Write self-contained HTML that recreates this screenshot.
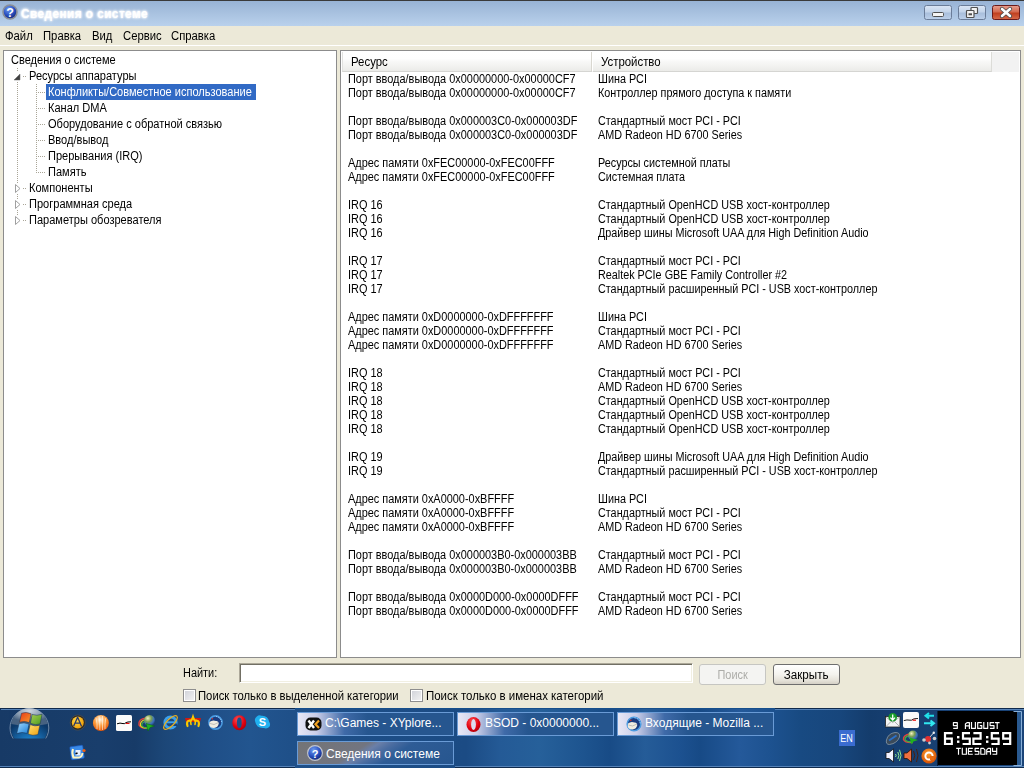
<!DOCTYPE html>
<html><head><meta charset="utf-8">
<style>
*{margin:0;padding:0;box-sizing:border-box}
html,body{width:1024px;height:768px;overflow:hidden;background:#ece9d8;font-family:"Liberation Sans",sans-serif;font-size:11px;color:#000;position:relative}
.abs{position:absolute}
#topline{left:0;top:0;width:1024px;height:1px;background:#3a3a3a}
#title{left:0;top:1px;width:1024px;height:25px;background:linear-gradient(#98b3d5,#a9c2e0 50%,#b9d1ec)}
#ttext{left:21px;top:6px;font-weight:bold;font-size:13px;letter-spacing:0.6px;color:#fff;text-shadow:0 0 2px #fff,0 0 3px #fff,0 0 4px #e8f0ff;white-space:nowrap;transform-origin:0 0;transform:scaleX(0.895)}
#menu span{position:absolute;top:30px;white-space:nowrap;line-height:13px;font-size:12px;transform:scaleX(.94) translateZ(0);transform-origin:0 0}
#wline{left:0;top:45px;width:1024px;height:1px;background:#fff}
.panel{background:#fff;border:1px solid #8c8c8c}
#lp{left:3px;top:50px;width:334px;height:608px}
#rp{left:340px;top:50px;width:681px;height:608px}
.t{position:absolute;white-space:nowrap;line-height:14px;font-size:12px;transform:scaleX(.9) translateZ(0);transform-origin:0 0}
.t1{transform:scaleX(.91) translateZ(0)}
.s{font-size:12px;transform:scaleX(.91) translateZ(0);transform-origin:0 0;white-space:nowrap}
.tt{position:absolute;white-space:nowrap;line-height:16px;font-size:12px;transform:scaleX(.92) translateZ(0);transform-origin:0 0}
.sel{color:#fff}
#selbg{left:46px;top:84px;width:210px;height:16px;background:#316ac5}
#hdr{left:342px;top:52px;width:677px;height:20px;background:#f2f2f2}
.hc{position:absolute;top:0;height:20px;background:linear-gradient(#fff 0,#fefefe 35%,#f8f8f7 50%,#f2f2f0 75%,#ebebe8 100%);border-bottom:1px solid #d5d5d2}
.hc span{position:absolute;top:3px;line-height:14px;font-size:12px;transform:scaleX(.95) translateZ(0);transform-origin:0 0}
.sep{position:absolute;top:0;width:2px;height:19px;border-left:1px solid #d9d7d0;border-right:1px solid #fff}
.btn{position:absolute;border:1px solid #003c74;border-radius:3px;background:linear-gradient(#fff,#f4f3ee 50%,#e6e3da 80%,#d4d0c6);text-align:center;line-height:21px}
.chk{position:absolute;width:13px;height:13px;border:1px solid #8e8e8e;box-shadow:inset 0 0 0 1px #fff;background:linear-gradient(135deg,#cfd1d8,#f4f4f4)}
#tb{left:0;top:708px;width:1024px;height:60px;background:linear-gradient(90deg,#1a3e6b 0,#1f4a7d 20%,#245791 45%,#1f4c82 70%,#1a4175 100%);border-top:1px solid #5a83b8}
.tbtn{position:absolute;overflow:visible;height:24px;width:157px;border:1px solid #6a9bd6;color:#fff;font-size:12px;line-height:20px;padding-left:27px;white-space:nowrap;overflow:hidden;background:linear-gradient(90deg,#e8e8f6 0,#c9cde8 12%,#3f6aa8 30%,#26568f 45%,#26568f 100%)}
.tbtn.act{padding-top:2px;padding-left:28px;background:linear-gradient(147deg,#747476 0,#727580 38%,#6a7fa8 44%,#4a6ca0 52%,#2e5c96 62%,#27568f 100%)}
.t,.tt,.s,#menu span,.hc span{padding-bottom:4px}
</style></head><body>
<div class="abs" id="topline"></div>
<div class="abs" id="title"></div>
<svg class="abs" style="left:2px;top:4px" width="17" height="17" viewBox="0 0 17 17">
 <defs><radialGradient id="hg" cx="0.4" cy="0.3" r="0.7"><stop offset="0" stop-color="#6f9cf0"/><stop offset="0.6" stop-color="#2a50c0"/><stop offset="1" stop-color="#14287a"/></radialGradient></defs>
 <circle cx="8" cy="8" r="7" fill="url(#hg)" stroke="#8a8f98" stroke-width="1.6"/>
 <text x="8" y="12.6" font-family="Liberation Sans" font-weight="bold" font-size="12.5" fill="#fff" text-anchor="middle">?</text>
</svg>
<div class="abs" id="ttext">Сведения о системе</div>
<div id="menu">
<span style="left:5px">Файл</span><span style="left:43px">Правка</span><span style="left:92px">Вид</span><span style="left:123px">Сервис</span><span style="left:171px">Справка</span>
</div>
<!-- window buttons -->
<svg class="abs" style="left:923px;top:4px" width="100" height="18" viewBox="0 0 100 18">
 <defs>
  <linearGradient id="wb" x1="0" y1="0" x2="0" y2="1"><stop offset="0" stop-color="#dbe6f4"/><stop offset="0.45" stop-color="#c3d4ea"/><stop offset="0.55" stop-color="#a9bfdc"/><stop offset="1" stop-color="#bcd0ea"/></linearGradient>
  <linearGradient id="cb" x1="0" y1="0" x2="0" y2="1"><stop offset="0" stop-color="#e8a090"/><stop offset="0.45" stop-color="#d46a50"/><stop offset="0.55" stop-color="#c04020"/><stop offset="1" stop-color="#d86a4a"/></linearGradient>
 </defs>
 <rect x="1.5" y="1.5" width="27" height="14" rx="2" fill="url(#wb)" stroke="#6a7c98"/>
  <rect x="9.5" y="8.5" width="11" height="4" rx="1" fill="#f4f4f4" stroke="#505050"/>
 <rect x="35.5" y="1.5" width="27" height="14" rx="2" fill="url(#wb)" stroke="#6a7c98"/>
 <rect x="48" y="3.5" width="6.5" height="6" rx="0.8" fill="#f4f4f4" stroke="#505050" stroke-width="1.2"/>
 <rect x="43.5" y="6.5" width="7.5" height="7" rx="0.8" fill="#f4f4f4" stroke="#505050" stroke-width="1.2"/>
 <rect x="45.5" y="9.3" width="3.5" height="2" fill="#505050"/>
 <rect x="69.5" y="1.5" width="27" height="14" rx="2" fill="url(#cb)" stroke="#6a1a1a"/>
 <path d="M79 5 L87 12 M87 5 L79 12" stroke="#4a4a4a" stroke-width="4.2" stroke-linecap="round"/>
 <path d="M79 5 L87 12 M87 5 L79 12" stroke="#fff" stroke-width="2.6" stroke-linecap="round"/>
</svg>
<div class="abs" id="wline"></div>
<div class="abs panel" id="lp"></div>
<div class="abs panel" id="rp"></div>

<!-- tree lines -->
<svg class="abs" style="left:0;top:0" width="60" height="240">
 <g fill="#aca899">
  <rect x="17" y="68" width="1" height="1"/><rect x="17" y="70" width="1" height="1"/>
 </g>
 <path id="l1" d="" />
</svg>
<div class="abs" id="selbg"></div>
<svg class="abs" style="left:0;top:0" width="60" height="240"><g fill="#a9a597"><rect x="17" y="68" width="1" height="1"/><rect x="17" y="70" width="1" height="1"/><rect x="17" y="82" width="1" height="1"/><rect x="17" y="84" width="1" height="1"/><rect x="17" y="86" width="1" height="1"/><rect x="17" y="88" width="1" height="1"/><rect x="17" y="90" width="1" height="1"/><rect x="17" y="92" width="1" height="1"/><rect x="17" y="94" width="1" height="1"/><rect x="17" y="96" width="1" height="1"/><rect x="17" y="98" width="1" height="1"/><rect x="17" y="100" width="1" height="1"/><rect x="17" y="102" width="1" height="1"/><rect x="17" y="104" width="1" height="1"/><rect x="17" y="106" width="1" height="1"/><rect x="17" y="108" width="1" height="1"/><rect x="17" y="110" width="1" height="1"/><rect x="17" y="112" width="1" height="1"/><rect x="17" y="114" width="1" height="1"/><rect x="17" y="116" width="1" height="1"/><rect x="17" y="118" width="1" height="1"/><rect x="17" y="120" width="1" height="1"/><rect x="17" y="122" width="1" height="1"/><rect x="17" y="124" width="1" height="1"/><rect x="17" y="126" width="1" height="1"/><rect x="17" y="128" width="1" height="1"/><rect x="17" y="130" width="1" height="1"/><rect x="17" y="132" width="1" height="1"/><rect x="17" y="134" width="1" height="1"/><rect x="17" y="136" width="1" height="1"/><rect x="17" y="138" width="1" height="1"/><rect x="17" y="140" width="1" height="1"/><rect x="17" y="142" width="1" height="1"/><rect x="17" y="144" width="1" height="1"/><rect x="17" y="146" width="1" height="1"/><rect x="17" y="148" width="1" height="1"/><rect x="17" y="150" width="1" height="1"/><rect x="17" y="152" width="1" height="1"/><rect x="17" y="154" width="1" height="1"/><rect x="17" y="156" width="1" height="1"/><rect x="17" y="158" width="1" height="1"/><rect x="17" y="160" width="1" height="1"/><rect x="17" y="162" width="1" height="1"/><rect x="17" y="164" width="1" height="1"/><rect x="17" y="166" width="1" height="1"/><rect x="17" y="168" width="1" height="1"/><rect x="17" y="170" width="1" height="1"/><rect x="17" y="172" width="1" height="1"/><rect x="17" y="174" width="1" height="1"/><rect x="17" y="176" width="1" height="1"/><rect x="17" y="178" width="1" height="1"/><rect x="17" y="180" width="1" height="1"/><rect x="17" y="182" width="1" height="1"/><rect x="17" y="194" width="1" height="1"/><rect x="17" y="196" width="1" height="1"/><rect x="17" y="198" width="1" height="1"/><rect x="17" y="210" width="1" height="1"/><rect x="17" y="212" width="1" height="1"/><rect x="17" y="214" width="1" height="1"/><rect x="23" y="76" width="1" height="1"/><rect x="25" y="76" width="1" height="1"/><rect x="23" y="188" width="1" height="1"/><rect x="25" y="188" width="1" height="1"/><rect x="23" y="204" width="1" height="1"/><rect x="25" y="204" width="1" height="1"/><rect x="23" y="220" width="1" height="1"/><rect x="25" y="220" width="1" height="1"/><rect x="36" y="84" width="1" height="1"/><rect x="36" y="86" width="1" height="1"/><rect x="36" y="88" width="1" height="1"/><rect x="36" y="90" width="1" height="1"/><rect x="36" y="92" width="1" height="1"/><rect x="36" y="94" width="1" height="1"/><rect x="36" y="96" width="1" height="1"/><rect x="36" y="98" width="1" height="1"/><rect x="36" y="100" width="1" height="1"/><rect x="36" y="102" width="1" height="1"/><rect x="36" y="104" width="1" height="1"/><rect x="36" y="106" width="1" height="1"/><rect x="36" y="108" width="1" height="1"/><rect x="36" y="110" width="1" height="1"/><rect x="36" y="112" width="1" height="1"/><rect x="36" y="114" width="1" height="1"/><rect x="36" y="116" width="1" height="1"/><rect x="36" y="118" width="1" height="1"/><rect x="36" y="120" width="1" height="1"/><rect x="36" y="122" width="1" height="1"/><rect x="36" y="124" width="1" height="1"/><rect x="36" y="126" width="1" height="1"/><rect x="36" y="128" width="1" height="1"/><rect x="36" y="130" width="1" height="1"/><rect x="36" y="132" width="1" height="1"/><rect x="36" y="134" width="1" height="1"/><rect x="36" y="136" width="1" height="1"/><rect x="36" y="138" width="1" height="1"/><rect x="36" y="140" width="1" height="1"/><rect x="36" y="142" width="1" height="1"/><rect x="36" y="144" width="1" height="1"/><rect x="36" y="146" width="1" height="1"/><rect x="36" y="148" width="1" height="1"/><rect x="36" y="150" width="1" height="1"/><rect x="36" y="152" width="1" height="1"/><rect x="36" y="154" width="1" height="1"/><rect x="36" y="156" width="1" height="1"/><rect x="36" y="158" width="1" height="1"/><rect x="36" y="160" width="1" height="1"/><rect x="36" y="162" width="1" height="1"/><rect x="36" y="164" width="1" height="1"/><rect x="36" y="166" width="1" height="1"/><rect x="36" y="168" width="1" height="1"/><rect x="36" y="170" width="1" height="1"/><rect x="36" y="172" width="1" height="1"/><rect x="38" y="92" width="1" height="1"/><rect x="40" y="92" width="1" height="1"/><rect x="42" y="92" width="1" height="1"/><rect x="44" y="92" width="1" height="1"/><rect x="38" y="108" width="1" height="1"/><rect x="40" y="108" width="1" height="1"/><rect x="42" y="108" width="1" height="1"/><rect x="44" y="108" width="1" height="1"/><rect x="38" y="124" width="1" height="1"/><rect x="40" y="124" width="1" height="1"/><rect x="42" y="124" width="1" height="1"/><rect x="44" y="124" width="1" height="1"/><rect x="38" y="140" width="1" height="1"/><rect x="40" y="140" width="1" height="1"/><rect x="42" y="140" width="1" height="1"/><rect x="44" y="140" width="1" height="1"/><rect x="38" y="156" width="1" height="1"/><rect x="40" y="156" width="1" height="1"/><rect x="42" y="156" width="1" height="1"/><rect x="44" y="156" width="1" height="1"/><rect x="38" y="172" width="1" height="1"/><rect x="40" y="172" width="1" height="1"/><rect x="42" y="172" width="1" height="1"/><rect x="44" y="172" width="1" height="1"/></g><path d="M20 74 L20 80 L14 80 Z" fill="#404040" stroke="#6a6a6a" stroke-width="0.5"/><path d="M15.5 184.5 L20 188.5 L15.5 192.5 Z" fill="#fff" stroke="#a0a0a0" stroke-width="1"/><path d="M15.5 200.5 L20 204.5 L15.5 208.5 Z" fill="#fff" stroke="#a0a0a0" stroke-width="1"/><path d="M15.5 216.5 L20 220.5 L15.5 224.5 Z" fill="#fff" stroke="#a0a0a0" stroke-width="1"/></svg>
<div class="tt" style="left:11px;top:52px">Сведения о системе</div>
<div class="tt" style="left:29px;top:68px">Ресурсы аппаратуры</div>
<div class="tt sel" style="left:48px;top:84px">Конфликты/Совместное использование</div>
<div class="tt" style="left:48px;top:100px">Канал DMA</div>
<div class="tt" style="left:48px;top:116px">Оборудование с обратной связью</div>
<div class="tt" style="left:48px;top:132px">Ввод/вывод</div>
<div class="tt" style="left:48px;top:148px">Прерывания (IRQ)</div>
<div class="tt" style="left:48px;top:164px">Память</div>
<div class="tt" style="left:29px;top:180px">Компоненты</div>
<div class="tt" style="left:29px;top:196px">Программная среда</div>
<div class="tt" style="left:29px;top:212px">Параметры обозревателя</div>

<!-- list header -->
<div class="abs" id="hdr">
 <div class="hc" style="left:0;width:250px;border-left:1px solid #e2e2e0"><span style="left:8px">Ресурс</span></div>
 <div class="sep" style="left:249px"></div>
 <div class="hc" style="left:251px;width:399px;border-right:1px solid #dcdcd8"><span style="left:8px">Устройство</span></div>
</div>
<div class="t t1" style="left:348px;top:72px">Порт ввода/вывода 0x00000000-0x00000CF7</div><div class="t" style="left:598px;top:72px">Шина PCI</div>
<div class="t t1" style="left:348px;top:86px">Порт ввода/вывода 0x00000000-0x00000CF7</div><div class="t" style="left:598px;top:86px">Контроллер прямого доступа к памяти</div>
<div class="t t1" style="left:348px;top:114px">Порт ввода/вывода 0x000003C0-0x000003DF</div><div class="t" style="left:598px;top:114px">Стандартный мост PCI - PCI</div>
<div class="t t1" style="left:348px;top:128px">Порт ввода/вывода 0x000003C0-0x000003DF</div><div class="t" style="left:598px;top:128px">AMD Radeon HD 6700 Series</div>
<div class="t t1" style="left:348px;top:156px">Адрес памяти 0xFEC00000-0xFEC00FFF</div><div class="t" style="left:598px;top:156px">Ресурсы системной платы</div>
<div class="t t1" style="left:348px;top:170px">Адрес памяти 0xFEC00000-0xFEC00FFF</div><div class="t" style="left:598px;top:170px">Системная плата</div>
<div class="t t1" style="left:348px;top:198px">IRQ 16</div><div class="t" style="left:598px;top:198px">Стандартный OpenHCD USB хост-контроллер</div>
<div class="t t1" style="left:348px;top:212px">IRQ 16</div><div class="t" style="left:598px;top:212px">Стандартный OpenHCD USB хост-контроллер</div>
<div class="t t1" style="left:348px;top:226px">IRQ 16</div><div class="t" style="left:598px;top:226px">Драйвер шины Microsoft UAA для High Definition Audio</div>
<div class="t t1" style="left:348px;top:254px">IRQ 17</div><div class="t" style="left:598px;top:254px">Стандартный мост PCI - PCI</div>
<div class="t t1" style="left:348px;top:268px">IRQ 17</div><div class="t" style="left:598px;top:268px">Realtek PCIe GBE Family Controller #2</div>
<div class="t t1" style="left:348px;top:282px">IRQ 17</div><div class="t" style="left:598px;top:282px">Стандартный расширенный PCI - USB хост-контроллер</div>
<div class="t t1" style="left:348px;top:310px">Адрес памяти 0xD0000000-0xDFFFFFFF</div><div class="t" style="left:598px;top:310px">Шина PCI</div>
<div class="t t1" style="left:348px;top:324px">Адрес памяти 0xD0000000-0xDFFFFFFF</div><div class="t" style="left:598px;top:324px">Стандартный мост PCI - PCI</div>
<div class="t t1" style="left:348px;top:338px">Адрес памяти 0xD0000000-0xDFFFFFFF</div><div class="t" style="left:598px;top:338px">AMD Radeon HD 6700 Series</div>
<div class="t t1" style="left:348px;top:366px">IRQ 18</div><div class="t" style="left:598px;top:366px">Стандартный мост PCI - PCI</div>
<div class="t t1" style="left:348px;top:380px">IRQ 18</div><div class="t" style="left:598px;top:380px">AMD Radeon HD 6700 Series</div>
<div class="t t1" style="left:348px;top:394px">IRQ 18</div><div class="t" style="left:598px;top:394px">Стандартный OpenHCD USB хост-контроллер</div>
<div class="t t1" style="left:348px;top:408px">IRQ 18</div><div class="t" style="left:598px;top:408px">Стандартный OpenHCD USB хост-контроллер</div>
<div class="t t1" style="left:348px;top:422px">IRQ 18</div><div class="t" style="left:598px;top:422px">Стандартный OpenHCD USB хост-контроллер</div>
<div class="t t1" style="left:348px;top:450px">IRQ 19</div><div class="t" style="left:598px;top:450px">Драйвер шины Microsoft UAA для High Definition Audio</div>
<div class="t t1" style="left:348px;top:464px">IRQ 19</div><div class="t" style="left:598px;top:464px">Стандартный расширенный PCI - USB хост-контроллер</div>
<div class="t t1" style="left:348px;top:492px">Адрес памяти 0xA0000-0xBFFFF</div><div class="t" style="left:598px;top:492px">Шина PCI</div>
<div class="t t1" style="left:348px;top:506px">Адрес памяти 0xA0000-0xBFFFF</div><div class="t" style="left:598px;top:506px">Стандартный мост PCI - PCI</div>
<div class="t t1" style="left:348px;top:520px">Адрес памяти 0xA0000-0xBFFFF</div><div class="t" style="left:598px;top:520px">AMD Radeon HD 6700 Series</div>
<div class="t t1" style="left:348px;top:548px">Порт ввода/вывода 0x000003B0-0x000003BB</div><div class="t" style="left:598px;top:548px">Стандартный мост PCI - PCI</div>
<div class="t t1" style="left:348px;top:562px">Порт ввода/вывода 0x000003B0-0x000003BB</div><div class="t" style="left:598px;top:562px">AMD Radeon HD 6700 Series</div>
<div class="t t1" style="left:348px;top:590px">Порт ввода/вывода 0x0000D000-0x0000DFFF</div><div class="t" style="left:598px;top:590px">Стандартный мост PCI - PCI</div>
<div class="t t1" style="left:348px;top:604px">Порт ввода/вывода 0x0000D000-0x0000DFFF</div><div class="t" style="left:598px;top:604px">AMD Radeon HD 6700 Series</div>

<!-- find bar -->
<div class="abs s" style="left:183px;top:666px;line-height:14px">Найти:</div>
<div class="abs" style="left:239px;top:663px;width:454px;height:20px;background:#fff;border-top:1px solid #aca899;border-left:1px solid #aca899;border-bottom:1px solid #fff;border-right:1px solid #fff;box-shadow:inset 1px 1px 0 #716f64,inset -1px -1px 0 #f1efe2"></div>
<div class="btn" style="left:699px;top:664px;width:67px;height:21px;border-color:#c6c6c2;color:#acaca8;background:#f4f4f2"><span class="s" style="display:inline-block;transform-origin:50% 0">Поиск</span></div>
<div class="btn" style="left:773px;top:664px;width:67px;height:21px;border-color:#6e6e6e"><span class="s" style="display:inline-block;transform-origin:50% 0;transform:scaleX(.97) translateZ(0)">Закрыть</span></div>
<div class="chk" style="left:183px;top:689px"></div>
<div class="abs s" style="left:198px;top:689px;line-height:14px;transform:scaleX(.94) translateZ(0)">Поиск только в выделенной категории</div>
<div class="chk" style="left:410px;top:689px"></div>
<div class="abs s" style="left:426px;top:689px;line-height:14px;transform:scaleX(.955) translateZ(0)">Поиск только в именах категорий</div>

<!-- taskbar -->
<div class="abs" id="tb"></div>
<svg class="abs" style="left:0;top:708px" width="1024" height="60" viewBox="0 708 1024 60">
 <defs>
  <linearGradient id="tbg" gradientUnits="userSpaceOnUse" x1="0" y1="0" x2="1024" y2="0"><stop offset="0.0000" stop-color="#173a66"/><stop offset="0.0977" stop-color="#193e6c"/><stop offset="0.1318" stop-color="#173b68"/><stop offset="0.1611" stop-color="#1c4778"/><stop offset="0.2002" stop-color="#1f4e86"/><stop offset="0.2441" stop-color="#22558f"/><stop offset="0.2832" stop-color="#1f5089"/><stop offset="0.4551" stop-color="#1b4b84"/><stop offset="0.4883" stop-color="#245a96"/><stop offset="0.5273" stop-color="#26609a"/><stop offset="0.5664" stop-color="#1e5590"/><stop offset="0.5957" stop-color="#184b86"/><stop offset="0.6299" stop-color="#255c98"/><stop offset="0.6641" stop-color="#1c5190"/><stop offset="0.6836" stop-color="#174a86"/><stop offset="0.7227" stop-color="#24599a"/><stop offset="0.7520" stop-color="#1d5290"/><stop offset="0.7812" stop-color="#184a82"/><stop offset="0.8203" stop-color="#17467c"/><stop offset="0.8496" stop-color="#143c6c"/><stop offset="0.8691" stop-color="#163e70"/><stop offset="1.0000" stop-color="#1a4478"/></linearGradient>
  <radialGradient id="orbTop" cx="0.5" cy="0.15" r="0.6"><stop offset="0" stop-color="#d8dee6"/><stop offset="0.6" stop-color="#8ea0b4"/><stop offset="1" stop-color="#4a6482"/></radialGradient>
  <radialGradient id="orbBot" cx="0.5" cy="1" r="0.7"><stop offset="0" stop-color="#3ec8ff"/><stop offset="0.35" stop-color="#1a78c0"/><stop offset="1" stop-color="#0c3868"/></radialGradient>
  <clipPath id="orbClip"><rect x="0" y="708" width="60" height="30.5"/></clipPath>
  <radialGradient id="aimp" cx="0.4" cy="0.35" r="0.7"><stop offset="0" stop-color="#ffd84a"/><stop offset="1" stop-color="#f09a00"/></radialGradient>
  <radialGradient id="orng" cx="0.45" cy="0.3" r="0.75"><stop offset="0" stop-color="#fff4e0"/><stop offset="0.5" stop-color="#fb9a3a"/><stop offset="1" stop-color="#e04a00"/></radialGradient>
  <radialGradient id="globe" cx="0.35" cy="0.3" r="0.8"><stop offset="0" stop-color="#f0f0c0"/><stop offset="0.4" stop-color="#7aa050"/><stop offset="0.7" stop-color="#3a70c0"/><stop offset="1" stop-color="#203860"/></radialGradient>
  <radialGradient id="opera" cx="0.4" cy="0.3" r="0.8"><stop offset="0" stop-color="#ff5050"/><stop offset="0.6" stop-color="#e00010"/><stop offset="1" stop-color="#a00008"/></radialGradient>
  <radialGradient id="tbird" cx="0.4" cy="0.35" r="0.7"><stop offset="0" stop-color="#6aa8e8"/><stop offset="0.7" stop-color="#1e4e9a"/><stop offset="1" stop-color="#0e2a60"/></radialGradient>
  <radialGradient id="orng2" cx="0.45" cy="0.35" r="0.7"><stop offset="0" stop-color="#ffa030"/><stop offset="1" stop-color="#d04800"/></radialGradient>
 </defs>
 <rect x="0" y="708" width="1024" height="60" fill="url(#tbg)"/>
 <rect x="0" y="708" width="295" height="1" fill="#0f2a4c"/>
 <rect x="1" y="709" width="294" height="1" fill="#5582b8"/>
 <rect x="775" y="708" width="249" height="1" fill="#0f2a4c"/>
 <rect x="775" y="709" width="249" height="1" fill="#5582b8"/>
 <rect x="295" y="708" width="480" height="1" fill="#164f8c"/>
 <rect x="0" y="766" width="295" height="1" fill="#5582b8"/>
 <rect x="0" y="767" width="295" height="1" fill="#0f2a4c"/>
 <rect x="455" y="766" width="569" height="1" fill="#5582b8"/>
 <rect x="455" y="767" width="569" height="1" fill="#0f2a4c"/>
 <!-- start orb -->
 <g clip-path="url(#orbClip)">
  <circle cx="29.4" cy="728" r="19.4" fill="#1a3a60" stroke="#8fa8c4" stroke-width="0.8" opacity="0.9"/>
  <circle cx="29.4" cy="728" r="18.4" fill="url(#orbBot)"/>
  <path d="M11.2 724 A18.4 18.4 0 0 1 47.6 724 Q29.4 728 11.2 724 Z" fill="url(#orbTop)" opacity="0.95"/>
 </g>
 <defs>
  <linearGradient id="wr" x1="0" y1="0" x2="1" y2="1"><stop offset="0" stop-color="#e83818"/><stop offset="1" stop-color="#f89a28"/></linearGradient>
  <linearGradient id="wgn" x1="0" y1="0" x2="1" y2="1"><stop offset="0" stop-color="#a8d050"/><stop offset="1" stop-color="#4a9a20"/></linearGradient>
  <linearGradient id="wbl" x1="0" y1="0" x2="1" y2="1"><stop offset="0" stop-color="#a0d8ff"/><stop offset="1" stop-color="#1a80d8"/></linearGradient>
  <linearGradient id="wy" x1="0" y1="0" x2="1" y2="1"><stop offset="0" stop-color="#ffe070"/><stop offset="1" stop-color="#f0a010"/></linearGradient>
 </defs>
 <g transform="translate(16.5,712)" stroke="#1a3050" stroke-width="0.5">
  <path d="M5 1.2 Q9.5 -0.6 14.6 1.8 L12.8 10.6 Q8.2 8.6 3 10.2 Z" fill="url(#wr)"/>
  <path d="M15.6 2.4 Q20.2 4.2 25.6 2.2 L23.6 12 Q18.8 13.6 13.9 11.3 Z" fill="url(#wgn)"/>
  <path d="M2.6 11.6 Q7.6 10 12.5 12 L10.6 21.4 Q5.6 19.4 0.2 21.6 Z" fill="url(#wbl)"/>
  <path d="M13.6 12.6 Q18.4 14.8 23.4 13.2 L21.4 22.6 Q16.2 24.2 11.6 22 Z" fill="url(#wy)"/>
 </g>
 <!-- quick launch -->
 <circle cx="77.8" cy="722.6" r="7.6" fill="#2a2a2a" stroke="#555" stroke-width="0.6"/>
 <circle cx="77.8" cy="722.6" r="6" fill="url(#aimp)"/>
 <path d="M73.6 726.2 L77.6 717.2 L80.6 724 M75 723.2 L80.2 723.2 L81.6 726.6" stroke="#2a3a6a" stroke-width="1.3" fill="none" stroke-linejoin="round"/>
 <circle cx="100.9" cy="723" r="8" fill="url(#orng)"/>
 <path d="M96 718 Q97.5 724 97 729 M99 716 Q100 723 99.8 730 M102.5 716 Q102.5 723 102.5 730 M105.8 718 Q104.6 724 105 729" stroke="#fff" stroke-width="1" fill="none" opacity="0.55"/>
 <rect x="116" y="715" width="16" height="16" rx="1.5" fill="#fbfbfa"/>
 <path d="M117 723.8 Q120 722.5 123 723.6 Q125 724 126 722.6 Q127.5 721.8 131 721.8" stroke="#000" stroke-width="1" fill="none"/>
 <path d="M125.8 723.4 L129.5 723.4" stroke="#e00" stroke-width="1.1"/>
 <!-- IDM -->
 <path d="M146 718 Q138 719 139 725 Q141 729 149 728" stroke="#e04040" stroke-width="1.5" fill="none"/>
 <path d="M145.5 719.5 Q139.8 721 140.4 725.5 Q142 728.5 149 728.2" stroke="#f0d020" stroke-width="1.2" fill="none"/>
 <path d="M145.8 721 Q141.5 722.5 141.8 725.8 Q143 728 149 728.5" stroke="#40b040" stroke-width="1.2" fill="none"/>
 <circle cx="149.5" cy="720.5" r="5.5" fill="url(#globe)"/>
 <path d="M146 723.5 L154.5 726 L150 727.5 L148 731 Z" fill="#20b020" stroke="#0a6010" stroke-width="0.5"/>
 <!-- IE -->
 <circle cx="170.5" cy="722.5" r="5.6" fill="none" stroke="#3aa0ee" stroke-width="3"/>
 <path d="M165.5 722.3 L176 722.3" stroke="#3aa0ee" stroke-width="2"/>
 <rect x="171" y="723.5" width="6" height="2.5" fill="#1a4478"/>
 <ellipse cx="170.5" cy="722.5" rx="9" ry="3.5" transform="rotate(-45 170.5 722.5)" fill="none" stroke="#e8b020" stroke-width="1.2"/>
 <!-- Miranda -->
 <path d="M185 718 L201 718 L200 722 L186 722 Z" fill="#d01a10"/>
 <path d="M187.5 726 Q186 721 189.5 720.5 Q191.5 721.5 193 717 Q194.5 721.5 196.5 720.5 Q200 721 198.5 726" stroke="#f8c800" stroke-width="2.2" fill="none" stroke-linecap="round"/>
 <path d="M190.5 721 L191 724.5 M195.5 721 L195 724.5" stroke="#f8c800" stroke-width="1.6" stroke-linecap="round"/>
 <!-- Thunderbird -->
 <circle cx="215.5" cy="722.5" r="6.6" fill="#1a3c80" stroke="#4a9ae0" stroke-width="1.6"/>
 <path d="M216 716.5 A6 6 0 0 1 221.5 722" stroke="#a8d8ff" stroke-width="1" fill="none" stroke-dasharray="1.2 1.2"/>
 <path d="M209.5 722 Q212.5 719.5 216 721 Q218.5 720.5 218.8 723.5 Q218 727.5 214 728 Q210 727.8 209.2 725 Z" fill="#f0ece0"/>
 <path d="M210 723.5 L214 724.5 L218.5 722.5" stroke="#a0a0a0" stroke-width="0.6" fill="none"/>
 <circle cx="212.3" cy="718.8" r="0.8" fill="#e03020"/>
 <!-- Opera -->
 <ellipse cx="239.3" cy="722.7" rx="7" ry="7.5" fill="url(#opera)"/>
 <ellipse cx="239.3" cy="722.7" rx="2.4" ry="5.3" fill="#1e4f89"/>
 <!-- Skype -->
 <path d="M256.8 716.5 Q259 714.5 261.5 715.8 Q268 715.5 269.2 721.8 Q271 724.6 269.2 727 Q266.8 729.2 264 728 Q256.5 728.6 255.2 721.8 Q254 718.8 256.8 716.5 Z" fill="#20b0f0"/>
 <text x="262.4" y="726" font-family="Liberation Sans" font-weight="bold" font-size="11" fill="#fff" text-anchor="middle">S</text>
 <!-- row 2 quick launch -->
 <rect x="70.5" y="746" width="13" height="13" rx="1" transform="rotate(-8 77 752)" fill="#3a8ae8" stroke="#1a58c0" stroke-width="0.6"/>
 <path d="M73 749 Q71.5 753 73.5 757.5 L79 757.5 Q82 757 82.5 753" stroke="#fff4c0" stroke-width="2" fill="none"/>
 <rect x="75.5" y="750" width="5" height="5.5" fill="#e8f0ff"/>
 <path d="M75.5 753.8 L77.5 753" stroke="#000" stroke-width="1.5"/>
 <circle cx="84" cy="750.5" r="1.6" fill="#f06010"/>
 <!-- tray -->
 <rect x="885.5" y="716.5" width="14.5" height="10.5" fill="#f4f4f4" stroke="#222" stroke-width="0.8"/>
 <path d="M886 717 L892.7 722.5 L899.5 717 M886 726.5 L891 721.5 M899.5 726.5 L894.5 721.5" stroke="#9a9a9a" stroke-width="0.8" fill="none"/>
 <circle cx="892.7" cy="717.2" r="4.3" fill="#1a9a2a"/>
 <path d="M892.7 714.5 L892.7 719.5 M890.4 717.6 L892.7 720 L895 717.6" stroke="#fff" stroke-width="1.3" fill="none"/>
 <rect x="903" y="712" width="16" height="16" rx="2" fill="#fbfbfa"/>
 <path d="M903.8 720.6 Q907 719.5 910 720.2 Q912 720.6 913 719.2 Q914.5 718.5 918 718.5" stroke="#222" stroke-width="1" fill="none"/>
 <path d="M912.6 720.2 L916 720.2" stroke="#e00" stroke-width="1.1"/>
 <path d="M934 715.7 L926 715.7 M929 713 L925.5 715.7 L929 718.4" stroke="#20e0e8" stroke-width="2" fill="none" />
 <path d="M924 723.3 L933.5 723.3 M930.5 720.5 L934 723.3 L930.5 726" stroke="#30e8f0" stroke-width="2" fill="none"/>
 <path d="M886.5 740 Q888 733.5 895 732.5 Q900.5 732.3 899.5 737 Q897 743.5 889.5 744.5 Q885.5 744.5 886.5 740 Z" fill="#3a4a5a" stroke="#8a9aa8" stroke-width="0.8"/>
 <path d="M889 740.5 L896.5 735.5" stroke="#2a70c8" stroke-width="2"/>
 <path d="M910 734 Q903 735 903.5 739.5 Q905 743 913 742.5" stroke="#e04040" stroke-width="1.5" fill="none"/>
 <path d="M909.8 735.5 Q904.6 736.6 905 739.6 Q906.5 742 913 742.2" stroke="#40b040" stroke-width="1.3" fill="none"/>
 <circle cx="913" cy="735.5" r="5" fill="url(#globe)"/>
 <path d="M909.5 737.5 L918 740 L913.5 741.5 L911.5 744.5 Z" fill="#20b020"/>
 <path d="M929 738 L933.5 733" stroke="#ddd" stroke-width="1"/>
 <circle cx="928" cy="739" r="3" fill="#e03030"/>
 <circle cx="924" cy="740" r="1.8" fill="#ccc"/><circle cx="934.5" cy="738.5" r="1.8" fill="#ccc"/><circle cx="929.5" cy="743" r="1.4" fill="#ccc"/><circle cx="933.8" cy="732.8" r="1.2" fill="#eee"/>
 <path d="M886 752.5 L889 752.5 L893.5 748.8 L893.5 762 L889 758.5 L886 758.5 Z" fill="#f2f2ff" stroke="#111" stroke-width="0.8"/>
 <path d="M895.5 754 Q896.8 755.5 895.5 757 M897.8 752 Q900 755.5 897.8 759 M899.5 749.8 Q902.5 755.5 899.5 761" stroke="#90e890" stroke-width="1" fill="none"/>
 <path d="M904 753 L907 753 L911.5 749 L911.5 762 L907 758.5 L904 758.5 Z" fill="#f07040" stroke="#301000" stroke-width="0.8"/>
 <path d="M913.5 751 Q916 755.5 913.5 760 M916.5 749 Q919.5 755.5 916.5 762" stroke="#4a2010" stroke-width="1" fill="none"/>
 <circle cx="929" cy="756" r="7.6" fill="url(#orng2)"/>
 <circle cx="929" cy="756" r="3.6" fill="none" stroke="#fff" stroke-width="2"/>
 <rect x="930" y="756" width="4" height="4" fill="#e86a10"/>
 <!-- clock -->
 <rect x="937" y="711" width="1" height="55" fill="#0a1c34"/>
 <rect x="938" y="711" width="79" height="54" fill="#000"/>
 <path d="M1013.5 711.5 L1021.5 711.5 L1021.5 765.5 L1013.5 765.5" stroke="#8ab0d8" stroke-width="1" fill="none"/>
 <rect x="1017" y="712" width="4" height="53" fill="#2a5a90"/>
 <g fill="none" stroke="#fff" stroke-width="2.2" stroke-linejoin="miter" stroke-linecap="butt">
  <path d="M952.5 733.2 L945 733.2 L945 744 L951.8 744 L951.8 738.6 L945 738.6"/>
  <path d="M970 733.2 L963 733.2 L963 738.6 L969.8 738.6 L969.8 744 L962.6 744"/>
  <path d="M973.4 733.2 L980.6 733.2 L980.6 738.6 L973.4 738.6 L973.4 744 L981.4 744"/>
  <path d="M999 733.2 L991.8 733.2 L991.8 738.6 L998.6 738.6 L998.6 744 L991.4 744"/>
  <path d="M1010.2 738.6 L1003.2 738.6 L1003.2 733.2 L1010.2 733.2 L1010.2 744 L1003 744"/>
 </g>
 <g fill="#fff"><rect x="957" y="736" width="2.4" height="2.4"/><rect x="957" y="740.5" width="2.4" height="2.4"/><rect x="986" y="736" width="2.4" height="2.4"/><rect x="986" y="740.5" width="2.4" height="2.4"/></g>
 <g fill="none" stroke="#fff" stroke-width="1.15" stroke-linejoin="round">
  <path d="M957.3 725.6 L953.4 725.6 L953.4 722.6 L957.3 722.6 L957.3 728.4 L953.2 728.4"/>
  <path d="M965.4 729 L965.4 724 L967 722.6 L969.4 722.6 L969.4 729 M965.4 725.8 L969.4 725.8"/>
  <path d="M971.5 722 L971.5 728.4 L975.4 728.4 L975.4 722"/>
  <path d="M981.8 722.6 L977.7 722.6 L977.7 728.4 L981.8 728.4 L981.8 725.6 L979.8 725.6"/>
  <path d="M983.8 722 L983.8 728.4 L987.7 728.4 L987.7 722"/>
  <path d="M994 722.6 L990.1 722.6 L990.1 725.6 L994 725.6 L994 728.4 L989.9 728.4"/>
  <path d="M994.8 722.6 L999.6 722.6 M997.2 722.6 L997.2 729"/>
  <path d="M956.2 748.4 L960.8 748.4 M958.5 748.4 L958.5 754.8"/>
  <path d="M962.3 747.8 L962.3 754.2 L966.4 754.2 L966.4 747.8"/>
  <path d="M972.8 748.4 L968.4 748.4 L968.4 754.2 L972.8 754.2 M968.4 751.3 L972.2 751.3"/>
  <path d="M979 748.4 L975.1 748.4 L975.1 751.3 L978.8 751.3 L978.8 754.2 L974.7 754.2"/>
  <path d="M980.8 748.4 L983.5 748.4 L984.9 749.8 L984.9 754.2 L980.8 754.2 Z"/>
  <path d="M986.7 754.8 L986.7 749.8 L988.1 748.4 L990.5 748.4 L990.5 754.8 M986.7 751.6 L990.5 751.6"/>
  <path d="M992.5 747.8 L992.5 751.3 L996.7 751.3 M996.7 747.8 L996.7 754.2 L992.5 754.2"/>
 </g>
 <!-- EN -->
 <rect x="839" y="730" width="16" height="16" fill="#3a6cd0"/>
 <text x="840.3" y="742" font-family="Liberation Sans" font-size="11" fill="#fff" textLength="12.6" lengthAdjust="spacingAndGlyphs">EN</text>
</svg>
<div class="tbtn" style="left:297px;top:712px">C:\Games - XYplore...<svg class="abs" style="left:7px;top:3px" width="17" height="17" viewBox="0 0 17 17"><rect x="0.5" y="1.5" width="16" height="13" rx="5" fill="#111"/><path d="M3.5 4.5 L9 12 M9 4.5 L3.5 12" stroke="#fff" stroke-width="2.4"/><path d="M14 4.5 L10.5 8.3 L14 12" stroke="#f0a020" stroke-width="2.2" fill="none"/></svg></div>
<div class="tbtn" style="left:457px;top:712px">BSOD - 0x0000000...<svg class="abs" style="left:7px;top:3px" width="17" height="17" viewBox="0 0 17 17"><ellipse cx="8.5" cy="8.5" rx="7" ry="7.6" fill="url(#opera)"/><ellipse cx="8.5" cy="8.5" rx="2.4" ry="5.4" fill="#dcdcf0"/></svg></div>
<div class="tbtn" style="left:617px;top:712px">Входящие - Mozilla ...<svg class="abs" style="left:7px;top:2px" width="18" height="18" viewBox="0 0 18 18"><circle cx="9" cy="9" r="6.8" fill="#1a3c80" stroke="#4a9ae0" stroke-width="1.6"/><path d="M9.5 2.8 A6.2 6.2 0 0 1 15.2 8.5" stroke="#a8d8ff" stroke-width="1" fill="none" stroke-dasharray="1.2 1.2"/><path d="M3 8.5 Q6 6 9.5 7.5 Q12 7 12.3 10 Q11.5 14 7.5 14.5 Q3.5 14.3 2.7 11.5 Z" fill="#f0ece0"/><path d="M3.5 10 L7.5 11 L12 9" stroke="#a0a0a0" stroke-width="0.6" fill="none"/><circle cx="5.8" cy="5.3" r="0.8" fill="#e03020"/></svg></div>
<div class="tbtn act" style="left:297px;top:741px">Сведения о системе<svg class="abs" style="left:9px;top:3px" width="17" height="17" viewBox="0 0 17 17"><circle cx="8" cy="8" r="7.4" fill="url(#hg)" stroke="#c0c4cc" stroke-width="1.2"/><text x="8" y="12.5" font-family="Liberation Sans" font-weight="bold" font-size="11" fill="#fff" text-anchor="middle">?</text></svg></div>

</body></html>
